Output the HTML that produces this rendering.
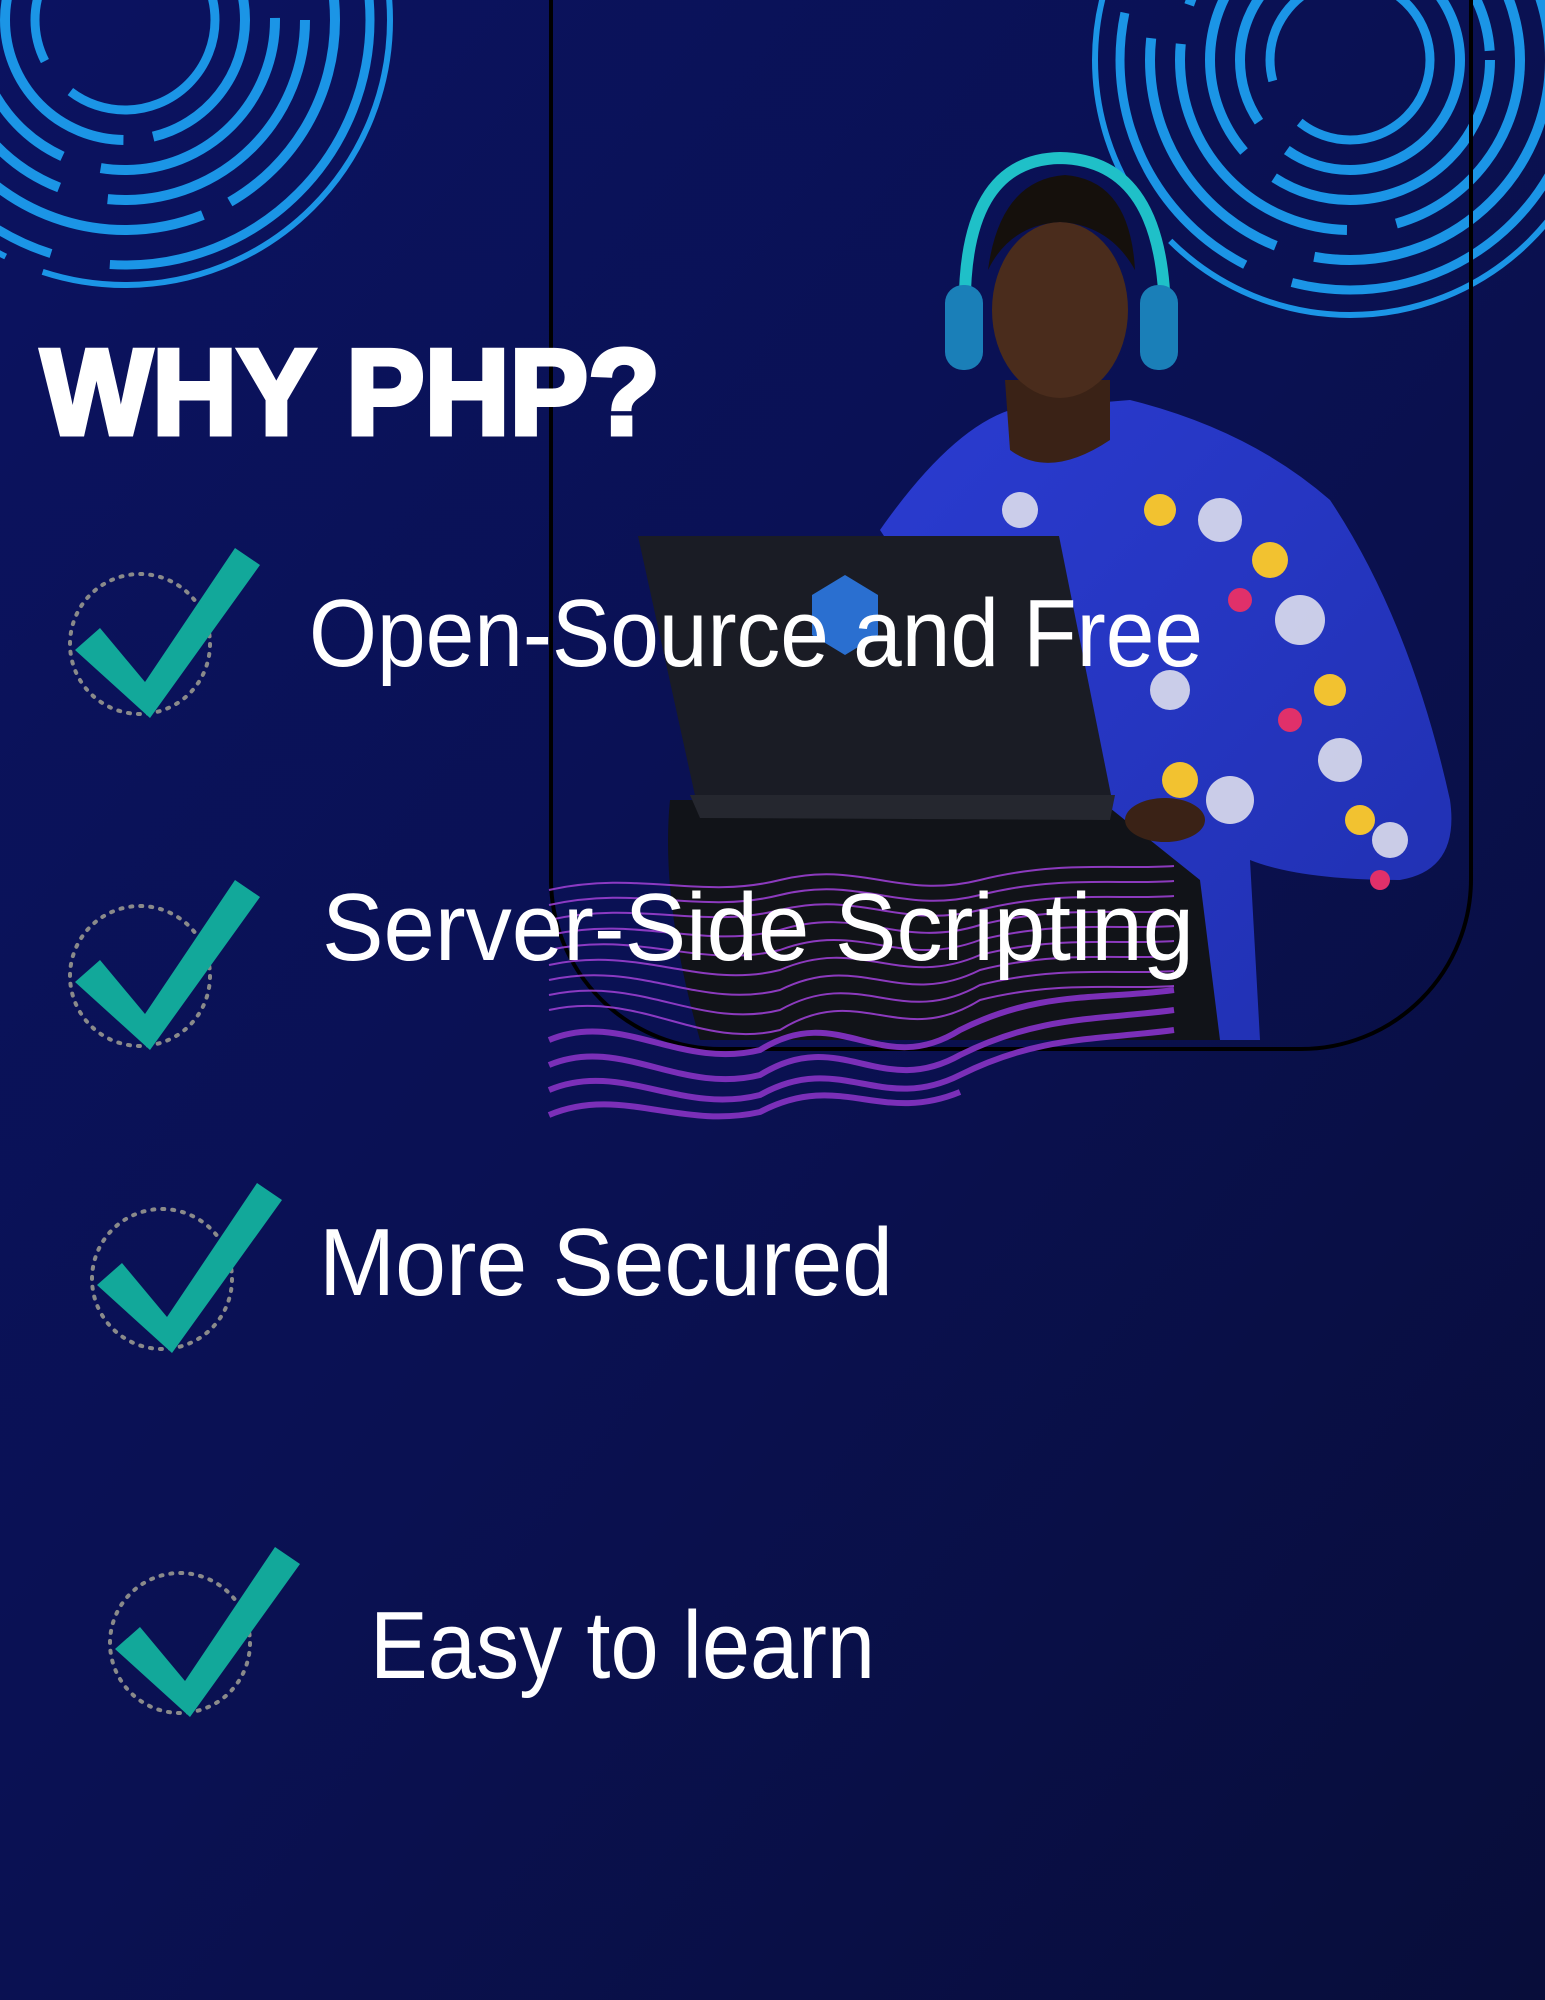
<!DOCTYPE html>
<html><head><meta charset="utf-8">
<style>
html,body{margin:0;padding:0;width:1545px;height:2000px;overflow:hidden;background:#0a104e}
svg{display:block}
text{font-family:"Liberation Sans",sans-serif}
</style></head>
<body>
<svg width="1545" height="2000" viewBox="0 0 1545 2000" xmlns="http://www.w3.org/2000/svg">
<defs>
<linearGradient id="bg" x1="0" y1="0" x2="1" y2="1">
<stop offset="0" stop-color="#0b1260"/><stop offset="0.5" stop-color="#0a1152"/><stop offset="1" stop-color="#080d3a"/>
</linearGradient>
<linearGradient id="shirt" x1="0" y1="0" x2="1" y2="1">
<stop offset="0" stop-color="#2a3bd0"/><stop offset="1" stop-color="#2030b0"/>
</linearGradient>
</defs>
<rect width="1545" height="2000" fill="url(#bg)"/>

<!-- left arcs -->
<g fill="none" stroke="#1b95e6" stroke-linecap="butt">
<circle cx="125" cy="20" r="90" stroke-width="9" stroke-dasharray="200 40 120 60"/>
<circle cx="125" cy="20" r="120" stroke-width="10" stroke-dasharray="160 30 220 50"/>
<circle cx="125" cy="20" r="150" stroke-width="10" stroke-dasharray="260 40 140 30"/>
<circle cx="125" cy="20" r="180" stroke-width="10" stroke-dasharray="300 50 180 40"/>
<circle cx="125" cy="20" r="210" stroke-width="10" stroke-dasharray="220 30 340 40"/>
<circle cx="125" cy="20" r="245" stroke-width="9" stroke-dasharray="400 60 300 50"/>
<circle cx="125" cy="20" r="265" stroke-width="6" stroke-dasharray="500 40"/>
</g>
<!-- right arcs -->
<g fill="none" stroke="#1b95e6">
<circle cx="1350" cy="60" r="80" stroke-width="9" stroke-dasharray="180 50 120 40"/>
<circle cx="1350" cy="60" r="110" stroke-width="10" stroke-dasharray="240 40 150 50"/>
<circle cx="1350" cy="60" r="140" stroke-width="10" stroke-dasharray="300 40 200 30"/>
<circle cx="1350" cy="60" r="170" stroke-width="10" stroke-dasharray="220 50 280 40"/>
<circle cx="1350" cy="60" r="200" stroke-width="10" stroke-dasharray="350 40 260 50"/>
<circle cx="1350" cy="60" r="230" stroke-width="9" stroke-dasharray="420 50 300 40"/>
<circle cx="1350" cy="60" r="255" stroke-width="6" stroke-dasharray="600 40"/>
</g>

<!-- rounded frame -->
<rect x="551" y="-200" width="920" height="1249" rx="170" fill="none" stroke="#000" stroke-width="4"/>

<!-- person -->
<g>
<!-- legs/pants -->
<path d="M670 800 Q660 900 700 1040 L1240 1040 Q1220 900 1200 800 Z" fill="#111318"/>
<!-- shirt -->
<path d="M880 530 Q950 430 1010 410 L1130 400 Q1250 430 1330 500 Q1410 620 1450 800 Q1460 870 1400 880 Q1300 880 1250 860 L1260 1040 L1220 1040 L1200 880 L1100 800 L900 560 Z" fill="url(#shirt)"/>
<g fill="#e8e8f0" opacity="0.85">
<circle cx="1220" cy="520" r="22"/><circle cx="1300" cy="620" r="25"/><circle cx="1170" cy="690" r="20"/><circle cx="1340" cy="760" r="22"/><circle cx="1230" cy="800" r="24"/><circle cx="1390" cy="840" r="18"/><circle cx="1020" cy="510" r="18"/>
</g>
<g fill="#f2c230">
<circle cx="1160" cy="510" r="16"/><circle cx="1270" cy="560" r="18"/><circle cx="1330" cy="690" r="16"/><circle cx="1180" cy="780" r="18"/><circle cx="1360" cy="820" r="15"/>
</g>
<g fill="#e0306a"><circle cx="1240" cy="600" r="12"/><circle cx="1290" cy="720" r="12"/><circle cx="1380" cy="880" r="10"/></g>
<!-- neck/face -->
<path d="M1005 380 L1010 450 Q1050 480 1110 440 L1110 380 Z" fill="#3a2216"/>
<ellipse cx="1060" cy="310" rx="68" ry="88" fill="#4a2c1c"/>
<path d="M988 270 Q1000 180 1065 175 Q1130 180 1135 270 Q1110 225 1060 222 Q1010 225 988 270 Z" fill="#15100c"/>
<!-- headphones -->
<path d="M965 320 Q960 160 1060 158 Q1165 160 1165 320" fill="none" stroke="#1fc0c8" stroke-width="12"/>
<rect x="945" y="285" width="38" height="85" rx="18" fill="#1a7fb8"/>
<rect x="1140" y="285" width="38" height="85" rx="18" fill="#1a7fb8"/>
<!-- laptop -->
<path d="M638 536 L1059 536 L1112 800 L696 800 Z" fill="#1a1c25"/>
<path d="M690 795 L1115 795 L1110 820 L700 818 Z" fill="#25272f"/>
<polygon points="845,575 878,595 878,635 845,655 812,635 812,595" fill="#2a6fd0"/>
<!-- hands -->
<ellipse cx="1165" cy="820" rx="40" ry="22" fill="#3a2216"/>
</g>

<!-- purple waves -->
<g fill="none" stroke="#9a3fd0" stroke-width="2" opacity="0.9">
<path d="M549 890 C640 870 700 900 780 880 C860 860 900 900 980 880 C1060 860 1120 870 1174 866"/>
<path d="M549 905 C640 885 700 915 780 895 C860 875 900 915 980 895 C1060 875 1120 885 1174 881"/>
<path d="M549 920 C640 900 700 930 780 910 C860 890 900 930 980 910 C1060 890 1120 900 1174 896"/>
<path d="M549 935 C640 915 700 950 780 930 C860 905 900 950 980 925 C1060 905 1120 915 1174 911"/>
<path d="M549 950 C640 930 700 970 780 950 C860 920 900 970 980 940 C1060 920 1120 930 1174 926"/>
<path d="M549 965 C640 945 700 990 780 970 C860 935 900 990 980 955 C1060 935 1120 945 1174 941"/>
<path d="M549 980 C640 960 700 1010 780 990 C860 950 900 1010 980 970 C1060 950 1120 960 1174 956"/>
<path d="M549 995 C640 975 700 1030 780 1010 C860 965 900 1030 980 985 C1060 965 1120 975 1174 971"/>
<path d="M549 1010 C640 990 700 1050 780 1030 C860 980 900 1050 980 1000 C1060 980 1120 990 1174 986"/>
</g>
<g fill="none" stroke="#7b2fb8" stroke-width="6">
<path d="M549 1040 C620 1010 680 1070 760 1050 C840 1000 880 1080 960 1030 C1040 990 1100 1000 1174 990"/>
<path d="M549 1065 C620 1035 680 1095 760 1075 C840 1025 880 1100 960 1055 C1040 1015 1100 1020 1174 1010"/>
<path d="M549 1090 C620 1060 680 1115 760 1095 C840 1050 880 1115 960 1075 C1040 1035 1100 1040 1174 1030"/>
<path d="M549 1115 C620 1085 680 1130 760 1112 C840 1070 880 1125 960 1092"/>
</g>

<!-- title -->
<text x="41" y="434" font-size="122" font-weight="900" fill="#fff" textLength="619" lengthAdjust="spacingAndGlyphs" stroke="#fff" stroke-width="5">WHY PHP?</text>

<!-- checks -->
<g id="chk">
</g>
<g fill="none" stroke="#8a8a8a" stroke-width="4" stroke-dasharray="2 8" stroke-linecap="round">
<circle cx="140" cy="644" r="70"/>
<circle cx="140" cy="976" r="70"/>
<circle cx="162" cy="1279" r="70"/>
<circle cx="180" cy="1643" r="70"/>
</g>
<g fill="#12a89a">
<path d="M75 650 L100 628 L145 682 L235 548 L260 565 L150 718 Z"/>
<path d="M75 982 L100 960 L145 1014 L235 880 L260 897 L150 1050 Z"/>
<path d="M97 1285 L122 1263 L167 1317 L257 1183 L282 1200 L172 1353 Z"/>
<path d="M115 1649 L140 1627 L185 1681 L275 1547 L300 1564 L190 1717 Z"/>
</g>

<!-- list text -->
<g fill="#fff" font-size="96">
<text x="309" y="666" textLength="894" lengthAdjust="spacingAndGlyphs">Open-Source and Free</text>
<text x="322" y="960" textLength="872" lengthAdjust="spacingAndGlyphs">Server-Side Scripting</text>
<text x="319" y="1295" textLength="574" lengthAdjust="spacingAndGlyphs">More Secured</text>
<text x="370" y="1678" textLength="505" lengthAdjust="spacingAndGlyphs">Easy to learn</text>
</g>
</svg>
</body></html>
